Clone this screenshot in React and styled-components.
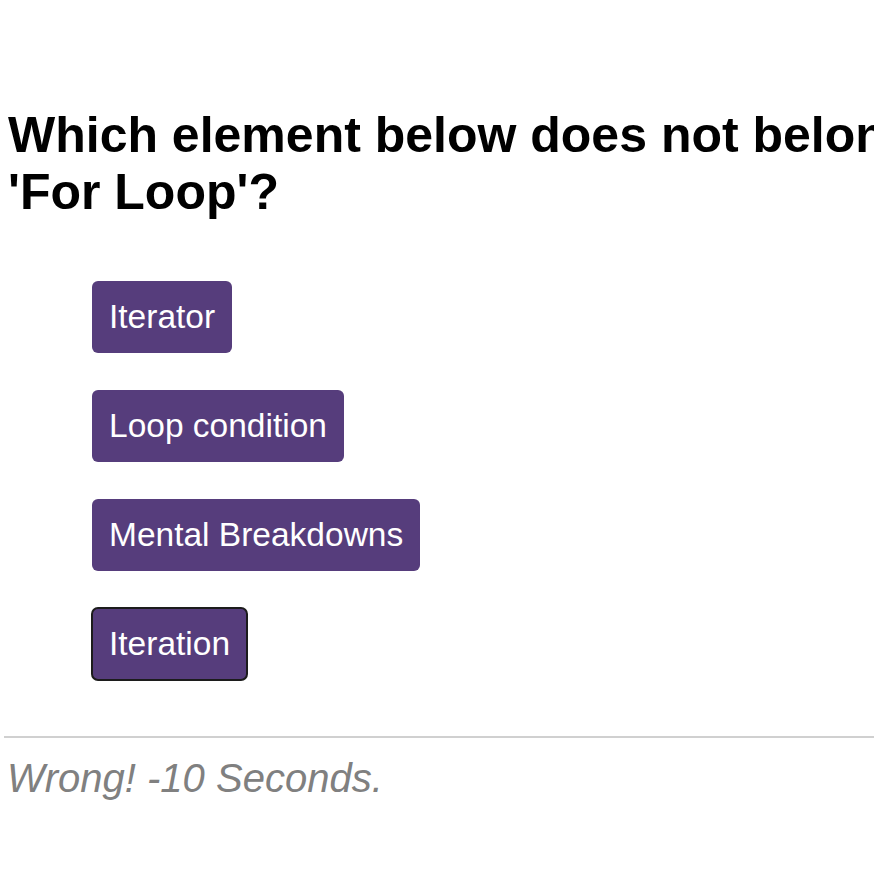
import React from "react";
import styled, { createGlobalStyle } from "styled-components";

const answers = ["Iterator", "Loop condition", "Mental Breakdowns", "Iteration"];
const selected = "Iteration";

function App() {
    return (
        <Page>
            <GlobalStyle />
            <Quiz>
                <Question>Which element below does not belong to a 'For Loop'?</Question>
                <Choices>
                    {answers.map((answer) => (
                        <li key={answer}>
                            <Choice $selected={answer === selected}>{answer}</Choice>
                        </li>
                    ))}
                </Choices>
                <Feedback>
                    <FeedbackText>Wrong! -10 Seconds.</FeedbackText>
                </Feedback>
            </Quiz>
        </Page>
    );
}

const GlobalStyle = createGlobalStyle`
    body {
        margin: 0;
        background: #ffffff;
        font-family: "Liberation Sans", Arial, sans-serif;
    }
`;

const Page = styled.div`
    width: 100vw;
    box-sizing: border-box;
    padding: 8px;
    overflow: hidden;
`;

const Quiz = styled.main`
    width: 1060px;
    padding-top: 99px;
`;

const Question = styled.h1`
    margin: 0;
    font-size: 50px;
    line-height: 57px;
    font-weight: 700;
    color: #000000;
`;

const Choices = styled.ul`
    list-style: none;
    margin: 60px 0 0;
    padding: 0 0 0 84px;
    display: flex;
    flex-direction: column;
    align-items: flex-start;
    gap: 37px;
`;

const Choice = styled.button`
    background-color: #563d7c;
    color: #ffffff;
    border: none;
    border-radius: 6px;
    padding: 17px 17px;
    font-family: "Liberation Sans", Arial, sans-serif;
    font-size: 33.5px;
    line-height: 38px;
    cursor: pointer;
    outline: ${(props) => (props.$selected ? "2px solid #1c1c1c" : "none")};
    outline-offset: -1px;
`;

const Feedback = styled.div`
    margin: 56px 0 0 -4px;
    width: 874px;
    border-top: 2px solid #d0d0d0;
    padding: 18px 0 0 3px;
`;

const FeedbackText = styled.p`
    margin: 0;
    font-size: 40px;
    line-height: 44px;
    font-style: italic;
    color: #808080;
`;

export default App;
